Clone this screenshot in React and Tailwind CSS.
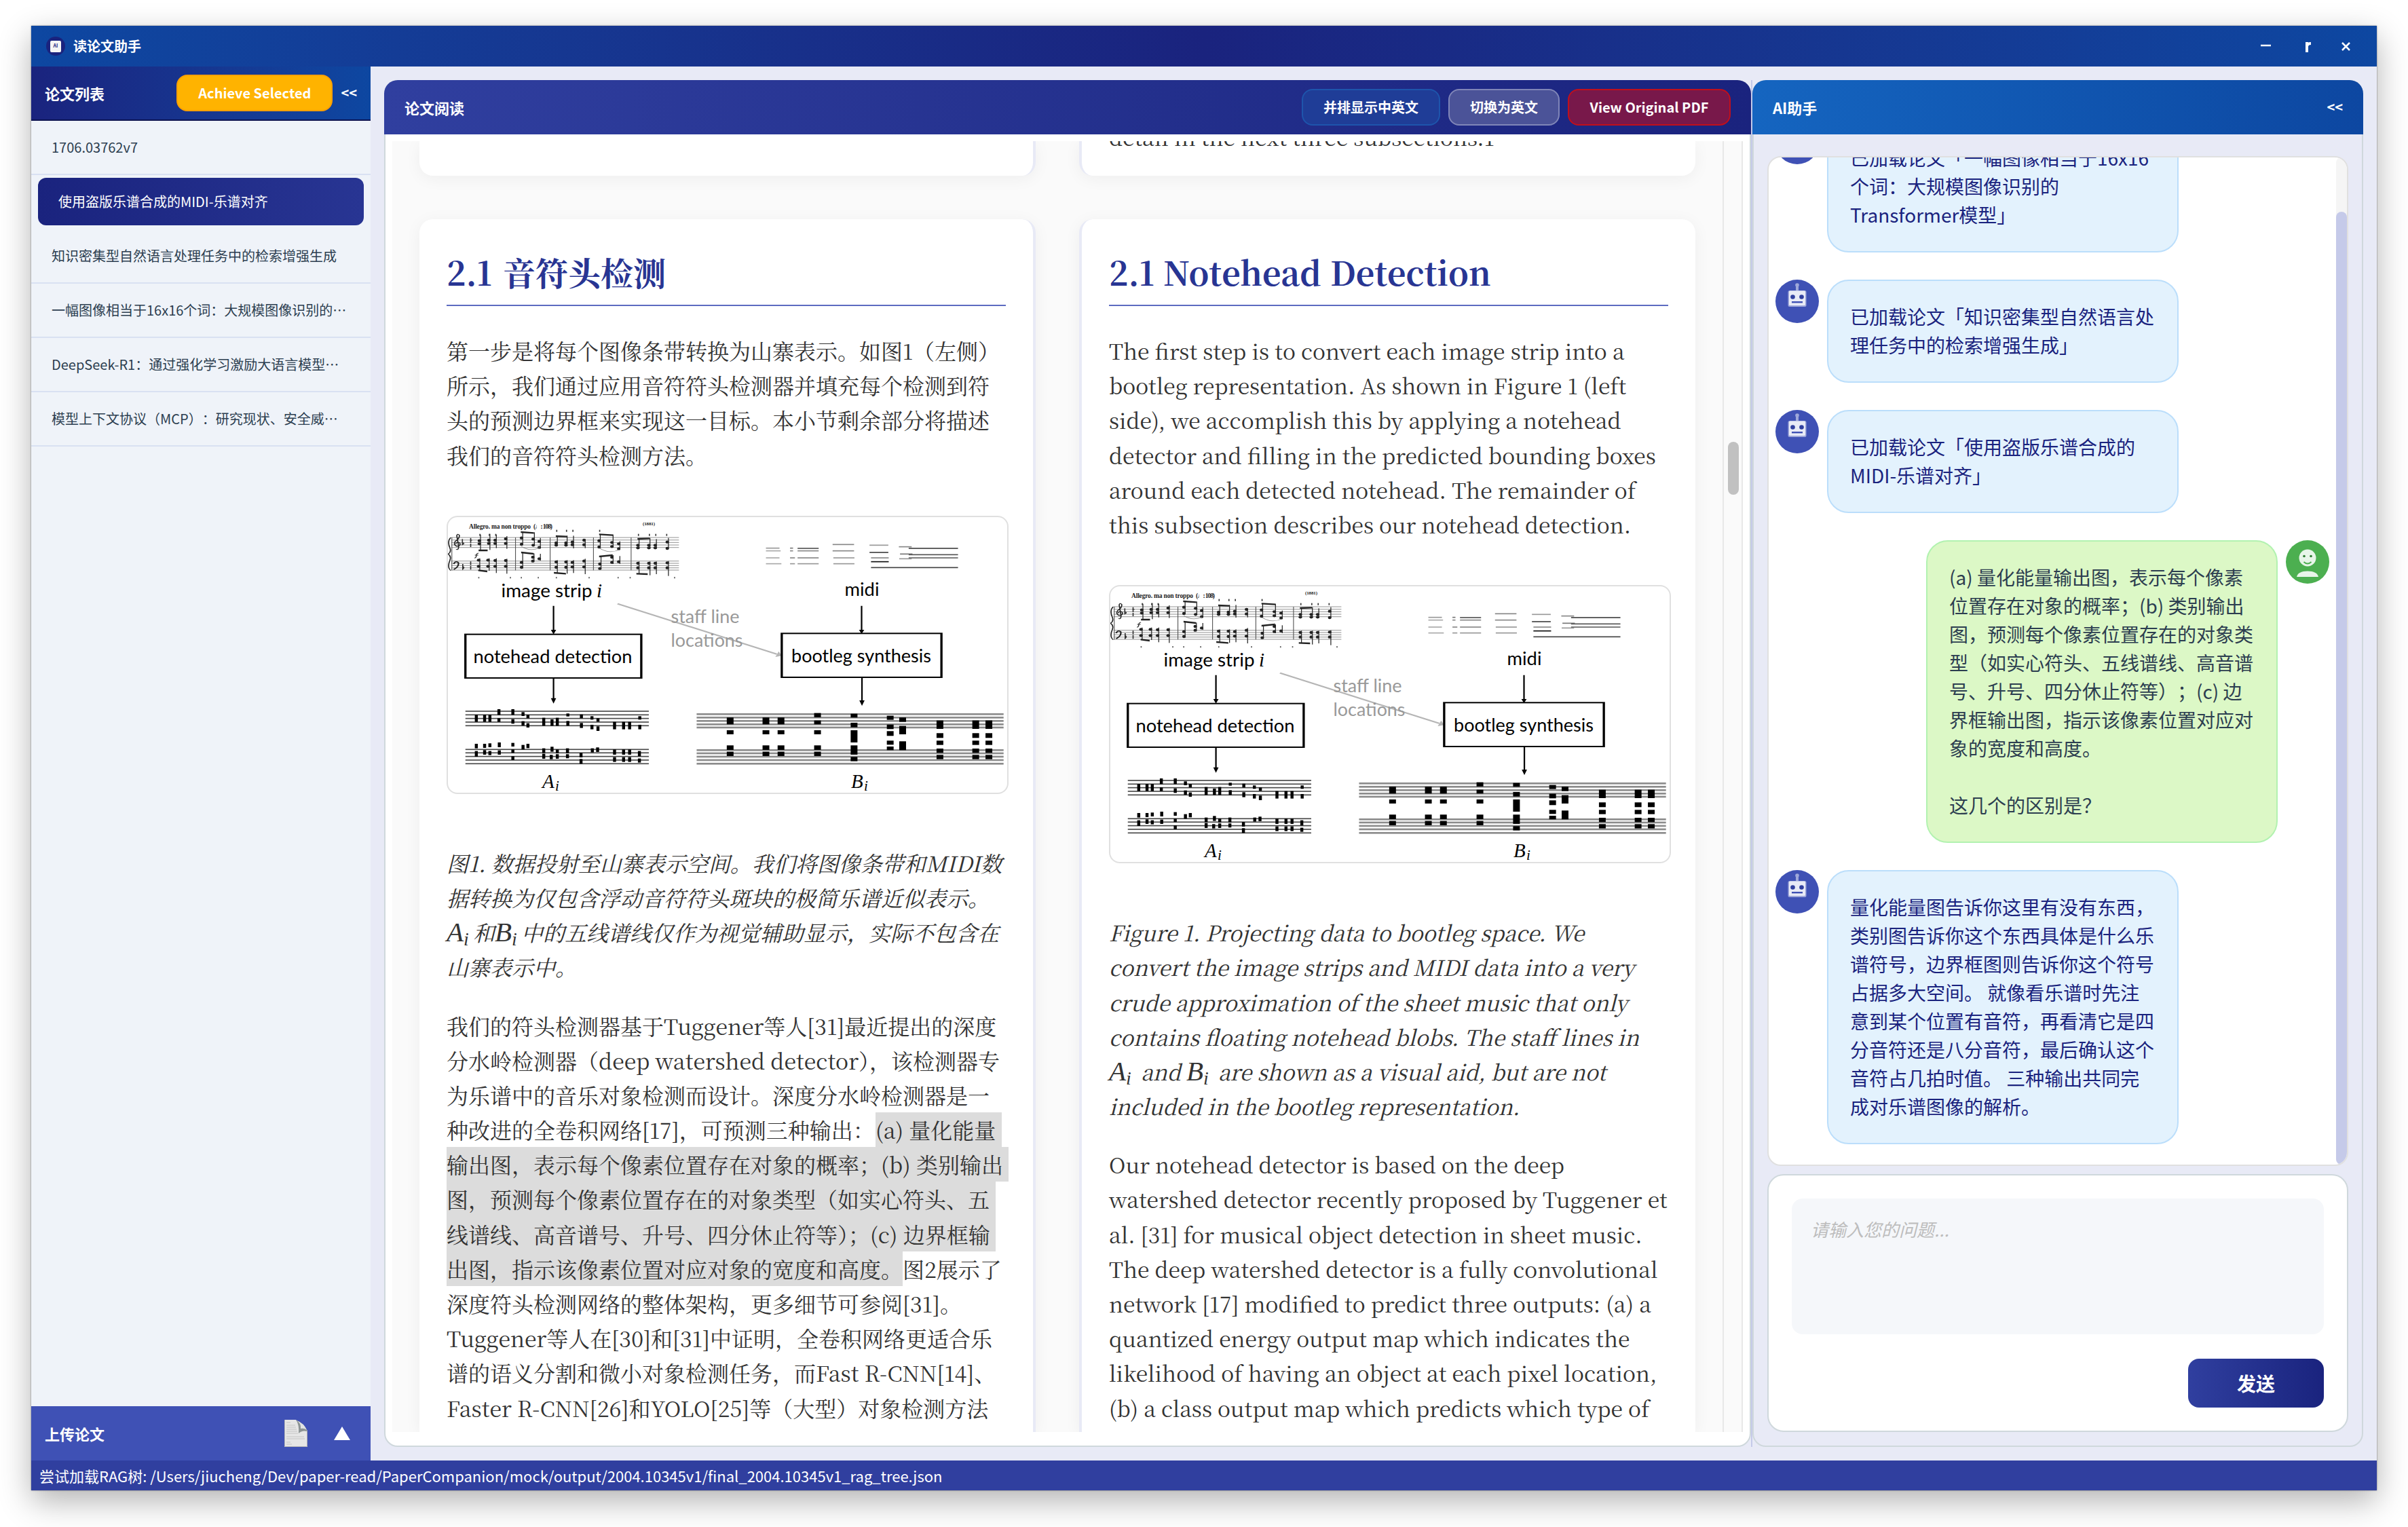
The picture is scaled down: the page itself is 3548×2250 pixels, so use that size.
import React from 'react';

const STAFF_A = [926, 942, 958, 974, 990, 1095, 1110, 1126, 1142, 1158];
const STAFF_B = [939, 954, 969, 984, 998, 1098, 1112, 1127, 1142, 1158];

const NOTES_A = [
  [112, 942, 973], [134, 942, 973], [148, 942, 973], [172, 917, 942], [172, 957, 973], [209, 917, 942], [209, 961, 981],
  [236, 930, 947], [236, 970, 989], [249, 942, 957], [249, 979, 998], [291, 955, 990], [313, 962, 990], [327, 955, 990],
  [355, 936, 949], [355, 969, 990], [391, 940, 957], [391, 978, 1000], [419, 948, 963], [419, 986, 1006], [435, 957, 972],
  [435, 993, 1013], [479, 973, 1006], [503, 973, 1006], [519, 973, 1006], [546, 948, 963], [546, 986, 1006],
  [112, 1070, 1090], [112, 1102, 1127], [134, 1070, 1088], [134, 1098, 1118], [148, 1068, 1085], [148, 1102, 1120],
  [173, 1064, 1085], [173, 1099, 1118], [209, 1066, 1082], [209, 1095, 1110], [209, 1125, 1142], [236, 1075, 1095],
  [249, 1070, 1089], [291, 1090, 1110], [291, 1114, 1136], [313, 1083, 1105], [311, 1119, 1138], [327, 1095, 1112],
  [327, 1116, 1136], [354, 1090, 1112], [354, 1116, 1134], [390, 1110, 1130], [390, 1137, 1158], [420, 1090, 1108],
  [434, 1086, 1106], [479, 1095, 1118], [479, 1129, 1150], [503, 1095, 1118], [503, 1129, 1150], [519, 1095, 1118],
  [519, 1129, 1150], [545, 1102, 1125], [545, 1135, 1153],
];

const LOW = [[954, 984], [1010, 1028], [1077, 1097], [1105, 1124]];
const HIGH = [[967, 1004], [1023, 1044], [1056, 1075], [1091, 1110], [1119, 1138]];
const NOTES_B = [
  [786, LOW], [881, LOW], [921, LOW],
  [1018, [[934, 953], [967, 984], [1010, 1028], [1077, 1097], [1105, 1124]]],
  [1115, [[937, 954], [977, 997], [1010, 1064], [1077, 1118], [1128, 1147]]],
  [1211, [[946, 964], [985, 1005], [1014, 1035], [1056, 1074], [1082, 1098]]],
  [1244, [[954, 973], [991, 1028], [1059, 1098]]],
  [1343, HIGH], [1438, HIGH], [1473, HIGH],
];

const MIDI = [
  [881, 917, 205, '#999'], [881, 920, 217, '#aaa'], [881, 917, 248, '#aaa'], [881, 922, 274, '#aaa'], [945, 953, 205, '#777'],
  [965, 1021, 206, '#555'], [945, 953, 217, '#888'], [965, 1021, 217, '#888'], [945, 958, 248, '#888'], [965, 1021, 248, '#888'],
  [945, 958, 274, '#999'], [965, 1021, 274, '#999'], [1058, 1115, 189, '#888'], [1058, 1115, 217, '#888'], [1060, 1116, 248, '#999'],
  [1060, 1116, 274, '#999'], [1156, 1206, 192, '#999'], [1156, 1206, 224, '#444'], [1160, 1207, 248, '#888'], [1160, 1207, 265, '#111'],
  [1160, 1391, 291, '#444'], [1234, 1268, 199, '#888'], [1260, 1391, 206, '#444'], [1237, 1270, 231, '#777'], [1260, 1391, 234, '#555'],
  [1235, 1268, 252, '#999'], [1260, 1391, 248, '#666'],
];

/* x, stem top, stem bottom, note heads */
const CHORDS = [
  [120, 145, 215, [172, 186]], [145, 142, 213, [170, 184]], [162, 145, 205, [170, 184]], [190, 152, 208, [164, 184]],
  [232, 135, 190, [160, 188]], [263, 135, 195, [165, 192]], [279, 160, 206, [175, 202]],
  [324, 150, 196, [182, 192]], [350, 150, 196, [182, 192]], [367, 150, 206, [178, 190]], [398, 165, 205, [170, 190]],
  [438, 145, 205, [172, 200]], [472, 148, 203, [180, 198]], [490, 175, 212, [186, 208]],
  [541, 165, 208, [192, 204]], [570, 160, 208, [192, 204]], [587, 165, 208, [192, 204]], [619, 160, 208, [178, 206]],
  [118, 250, 305, [258, 285]], [143, 250, 305, [258, 285]], [162, 250, 315, [260, 285]], [190, 252, 318, [260, 285]],
  [232, 225, 295, [268, 290]], [262, 228, 265, [245, 262]], [279, 230, 260, [252]],
  [324, 258, 315, [266, 290]], [350, 258, 318, [266, 290]], [367, 258, 315, [268, 288]], [398, 252, 320, [262, 288]],
  [440, 240, 298, [275, 295]], [472, 236, 275, [245, 268]], [490, 240, 275, [265]],
  [541, 264, 320, [272, 292]], [570, 264, 325, [272, 292]], [587, 264, 320, [272, 292]], [619, 262, 328, [270, 292]],
];

const BEAMS = [
  [118, 142, 215, 215], [230, 265, 134, 138], [323, 353, 152, 154], [438, 476, 144, 148], [540, 572, 164, 162],
  [117, 141, 303, 308], [231, 264, 224, 230], [318, 350, 314, 318], [438, 474, 242, 236], [537, 567, 318, 320],
];

function Figure() {
  return (
    <div className="h-[410px] w-[828px] shrink-0 overflow-hidden rounded-2xl border-2 border-[#e0e0e0] bg-white">
      <svg viewBox="2 2 824 406" className="block h-[406px] w-[824px]">
        <g transform="scale(.5549 .3333) translate(-33 -62)">
          {[158, 169, 180, 191, 202, 262, 272, 282, 292, 302].map((y) => (
            <rect key={y} x="45" y={y - 1.5} width="605" height="3.2" fill="#9a9a9a" />
          ))}
          {[46, 215, 307, 422, 522].map((x) => (
            <rect key={x} x={x} y="158" width="2" height="145" fill="#555" />
          ))}
          <path d="M44 158Q34 175 42 205Q46 222 37 231Q46 240 42 258Q34 290 44 304" fill="none" stroke="#222" strokeWidth="3" />
          <path d="M58 210Q66 215 65 195L60 150Q62 138 67 148Q68 162 56 175Q50 190 60 197Q72 196 68 182Q62 174 57 186" fill="none" stroke="#222" strokeWidth="3" />
          <path d="M52 275Q56 260 64 268Q68 285 52 300" fill="none" stroke="#222" strokeWidth="4" />
          <path d="M75 165V190Q82 184 76 180M76 275V298Q82 290 76 286M97 160V182M95 170H101M97 185V200M97 264V280M97 284V300" fill="none" stroke="#333" strokeWidth="3" />
          <path d="M118 227Q112 228 112 238Q112 247 107 249M108 236H117" fill="none" stroke="#333" strokeWidth="2.5" />
          {CHORDS.map(([x, a, b, heads], i) => (
            <g key={i} fill="#222">
              <rect x={x + 2} y={a} width="2.2" height={b - a} />
              {heads.map((h) => (
                <ellipse key={h} cx={x} cy={h} rx="4.6" ry="6.5" />
              ))}
            </g>
          ))}
          {BEAMS.map(([a, b, c, d], i) => (
            <path key={i} d={`M${a} ${c - 3.5}L${b} ${d - 3.5}V${d + 3.5}L${a} ${c + 3.5}Z`} fill="#222" />
          ))}
          <path d="M232 198Q255 222 280 204M440 206Q465 232 492 212" fill="none" stroke="#888" strokeWidth="2" />
          {[120, 145, 162, 324, 350, 367, 438, 541, 570, 587, 616].map((x) => (
            <rect key={x} x={x} y={x > 300 && x < 450 ? 124 : 142} width="3" height="9" fill="#333" />
          ))}
          {[117, 201, 230, 275, 323, 410, 487, 519, 637].map((x) => (
            <rect key={x} x={x} y="332" width="3" height="7" fill="#666" />
          ))}

          {MIDI.map(([a, b, y, c], i) => (
            <rect key={i} x={a} y={y - 2.5} width={b - a} height="5" fill={c} />
          ))}

          <path d="M487 451L910 674" stroke="#b5b5b5" strokeWidth="6" />
          <path d="M923 681L906 686L915 661Z" fill="#b5b5b5" />

          <rect x="83" y="586" width="467" height="193" fill="#fff" stroke="#000" strokeWidth="6" />
          <rect x="923" y="582" width="424" height="194" fill="#fff" stroke="#000" strokeWidth="6" />
          <path d="M317 460V572M317 781V875M1135 460V572M1136 777V885" stroke="#000" strokeWidth="4" />
          <path d="M310 566H324L317 586ZM310 868H324L317 892ZM1128 566H1142L1135 584ZM1129 878H1143L1136 902Z" />

          {STAFF_A.map((y) => (
            <rect key={y} x="83" y={y - 2.5} width="487" height="5" fill="#4a4a4a" />
          ))}
          {NOTES_A.map(([x, a, b], i) => (
            <rect key={i} x={x - 4} y={a} width="8" height={b - a} />
          ))}
          {STAFF_B.map((y) => (
            <rect key={y} x="697" y={y - 4} width="815" height="8" fill="#8c8c8c" />
          ))}
          {NOTES_B.map(([x, runs]) =>
            runs.map(([a, b]) => <rect key={`${x}-${a}`} x={x - 9} y={a} width="18" height={b - a} />)
          )}
        </g>
        <g fontFamily="Lato, 'Open Sans', sans-serif" fontSize="27">
          <text x="80.5" y="120" textLength="134" lengthAdjust="spacingAndGlyphs">image strip</text>
          <text x="586.5" y="117.5" textLength="51" lengthAdjust="spacingAndGlyphs">midi</text>
          <text x="39.5" y="217" textLength="234" lengthAdjust="spacingAndGlyphs">notehead detection</text>
          <text x="508" y="216" textLength="206" lengthAdjust="spacingAndGlyphs">bootleg synthesis</text>
          <text x="330.5" y="157.5" textLength="101" lengthAdjust="spacingAndGlyphs" fill="#999">staff line</text>
          <text x="330.5" y="193" textLength="106" lengthAdjust="spacingAndGlyphs" fill="#999">locations</text>
        </g>
        <g fontFamily="'Liberation Serif', serif" fontStyle="italic" fontSize="29">
          <text x="221" y="120">i</text>
          <text x="141" y="401">A</text>
          <text x="160" y="405" fontSize="21">i</text>
          <text x="596" y="401">B</text>
          <text x="615" y="405" fontSize="21">i</text>
        </g>
        <g fontFamily="'Liberation Serif', serif" fontWeight="bold" fontSize="9.5" fill="#222">
          <text x="33" y="19" textLength="91">Allegro. ma non troppo</text>
          <text x="128" y="19" textLength="28">(♩: 108)</text>
          <text x="289" y="14" fontSize="7" textLength="18">(1881)</text>
        </g>
      </svg>
    </div>
  );
}

function Line({ children }) {
  return <div className="h-[51.2px] text-[32px] leading-[51.2px] whitespace-nowrap">{children}</div>;
}

function En({ children }) {
  return <div className="h-[51.2px] text-[31.8px] leading-[51.2px] whitespace-nowrap">{children}</div>;
}

function Mark({ w, children }) {
  return (
    <div className={`h-[51.2px] bg-[#dcdcdc] ${w}`}>
      <Line>{children}</Line>
    </div>
  );
}

function Var({ name }) {
  return (
    <span className="inline-block h-[51px] w-[39px] align-top font-['Liberation_Serif',serif]">
      <span className="text-[41px]">{name}</span>
      <span className="relative top-[6px] text-[28px]">i</span>
    </span>
  );
}

function SectionTitle({ children, spacing }) {
  return (
    <h2 className={`mb-10 h-[88px] w-[824px] border-b-2 border-[#5c6bc0] text-[48px] leading-[76px] font-bold whitespace-nowrap text-[#283593] ${spacing}`}>
      {children}
    </h2>
  );
}

const CARD = 'w-[908px] shrink-0 bg-white shadow-[0_4px_24px_rgba(0,0,0,0.05)]';

function Reader() {
  return (
    <section className="flex h-[2014px] w-[2014px] shrink-0 flex-col rounded-[20px] border-2 border-[#cfd8dc] bg-white">
      <header className="-mx-0.5 -mt-0.5 flex h-20 shrink-0 items-center justify-end gap-3 rounded-t-[20px] bg-linear-to-r from-[#303f9f] to-[#1a237e] pr-[30px] pl-[30px] text-[20px] font-bold text-white">
        <h1 className="mr-auto text-[22px]">论文阅读</h1>
        <button className="h-[54px] w-[204px] rounded-2xl border-2 border-[#1e55ac] bg-[#1f3d97]">并排显示中英文</button>
        <button className="h-[54px] w-[164px] rounded-2xl border-2 border-[#8086b8] bg-[#4b5398]">切换为英文</button>
        <button className="h-[54px] w-[240px] rounded-2xl border-2 border-[#c00f1c] bg-[#78184a]">View Original PDF</button>
      </header>
      <div className="mx-[10px] mt-[10px] mb-[20px] flex min-h-0 flex-1 overflow-hidden bg-[#fafafa] font-['Noto_Serif_CJK_SC','Liberation_Serif',serif] text-[#333] [text-spacing-trim:normal]">
        <div className="flex h-[1902px] w-[1960px] flex-col gap-16 overflow-hidden px-10">
          <div className="flex h-[51px] shrink-0 gap-16">
            <div className={`${CARD} rounded-b-[20px] border-r-4 border-[#e8eaf6]`} />
            <div className={`${CARD} rounded-b-[20px] border-l-4 border-[#e8eaf6] px-10`}>
              <div className="-mt-8">
                <En>detail in the next three subsections.1</En>
              </div>
            </div>
          </div>
          <div className="flex min-h-0 flex-1 gap-16">
            <article className={`${CARD} rounded-t-[20px] border-r-4 border-[#e8eaf6] px-10 pt-10`}>
              <SectionTitle spacing="[word-spacing:4px]">2.1 音符头检测</SectionTitle>
              <Line>第一步是将每个图像条带转换为山寨表示。如图1（左侧）</Line>
              <Line>所示，我们通过应用音符符头检测器并填充每个检测到符</Line>
              <Line>头的预测边界框来实现这一目标。本小节剩余部分将描述</Line>
              <Line>我们的音符符头检测方法。</Line>
              <div className="mt-16 mb-[76px]">
                <Figure />
              </div>
              <div className="mb-[35px] italic">
                <Line>图1. 数据投射至山寨表示空间。我们将图像条带和MIDI数</Line>
                <Line>据转换为仅包含浮动音符符头斑块的极简乐谱近似表示。</Line>
                <Line>
                  <Var name="A" />和<Var name="B" />
                  中的五线谱线仅作为视觉辅助显示，实际不包含在
                </Line>
                <Line>山寨表示中。</Line>
              </div>
              <Line>我们的符头检测器基于Tuggener等人[31]最近提出的深度</Line>
              <Line>分水岭检测器（deep watershed detector），该检测器专</Line>
              <Line>为乐谱中的音乐对象检测而设计。深度分水岭检测器是一</Line>
              <div className="flex">
                <div className="w-[632px]">
                  <Line>种改进的全卷积网络[17]，可预测三种输出：</Line>
                </div>
                <Mark w="w-[186px]">(a) 量化能量</Mark>
              </div>
              <Mark w="w-[828px]">输出图，表示每个像素位置存在对象的概率；(b) 类别输出</Mark>
              <Mark w="w-[809px]">图，预测每个像素位置存在的对象类型（如实心符头、五</Mark>
              <Mark w="w-[809px]">线谱线、高音谱号、升号、四分休止符等）；(c) 边界框输</Mark>
              <div className="flex">
                <Mark w="w-[672px]">出图，指示该像素位置对应对象的宽度和高度。</Mark>
                <Line>图2展示了</Line>
              </div>
              <Line>深度符头检测网络的整体架构，更多细节可参阅[31]。</Line>
              <Line>Tuggener等人在[30]和[31]中证明，全卷积网络更适合乐</Line>
              <Line>谱的语义分割和微小对象检测任务，而Fast R-CNN[14]、</Line>
              <Line>Faster R-CNN[26]和YOLO[25]等（大型）对象检测方法</Line>
            </article>
            <article className={`${CARD} rounded-t-[20px] border-l-4 border-[#e8eaf6] px-10 pt-10`}>
              <SectionTitle spacing="[word-spacing:1px]">2.1 Notehead Detection</SectionTitle>
              <En>The first step is to convert each image strip into a</En>
              <En>bootleg representation. As shown in Figure 1 (left</En>
              <En>side), we accomplish this by applying a notehead</En>
              <En>detector and filling in the predicted bounding boxes</En>
              <En>around each detected notehead. The remainder of</En>
              <En>this subsection describes our notehead detection.</En>
              <div className="mt-16 mb-[76px]">
                <Figure />
              </div>
              <div className="mb-[35px] italic">
                <En>Figure 1. Projecting data to bootleg space. We</En>
                <En>convert the image strips and MIDI data into a very</En>
                <En>crude approximation of the sheet music that only</En>
                <En>contains floating notehead blobs. The staff lines in</En>
                <En>
                  <Var name="A" /> and <Var name="B" /> are shown as a visual aid, but are not
                </En>
                <En>included in the bootleg representation.</En>
              </div>
              <En>Our notehead detector is based on the deep</En>
              <En>watershed detector recently proposed by Tuggener et</En>
              <En>al. [31] for musical object detection in sheet music.</En>
              <En>The deep watershed detector is a fully convolutional</En>
              <En>network [17] modified to predict three outputs: (a) a</En>
              <En>quantized energy output map which indicates the</En>
              <En>likelihood of having an object at each pixel location,</En>
              <En>(b) a class output map which predicts which type of</En>
            </article>
          </div>
        </div>
        <div className="w-[30px] border-x-2 border-[#e8e8e8] pt-[443px] pl-[6px]">
          <div className="h-[78px] w-4 rounded-full bg-[#c1c1c1]" />
        </div>
      </div>
    </section>
  );
}

function Robot() {
  return (
    <svg viewBox="0 0 64 64" className="size-16 shrink-0">
      <circle cx="32" cy="32" r="32" fill="#3f51b5" />
      <path d="M32 8V17" stroke="#9fa8da" strokeWidth="4" />
      <circle cx="32" cy="8" r="2.8" fill="#9fa8da" />
      <rect x="18.5" y="16" width="27" height="24" rx="2.5" fill="#9fa8da" />
      <rect x="20" y="16.5" width="24" height="21.5" rx="1.5" fill="#e8eaf6" />
      <circle cx="25.5" cy="25.5" r="3.3" fill="#303f9f" />
      <circle cx="38.5" cy="25.5" r="3.3" fill="#303f9f" />
      <rect x="24" y="32" width="16" height="2.4" fill="#3f51b5" />
    </svg>
  );
}

function Person() {
  return (
    <svg viewBox="0 0 64 64" className="size-16 shrink-0">
      <circle cx="32" cy="32" r="32" fill="#4caf50" />
      <circle cx="32" cy="26" r="12.5" fill="#e8f5e9" />
      <circle cx="27" cy="23.5" r="1.8" fill="#2e7d32" />
      <circle cx="37" cy="23.5" r="1.8" fill="#2e7d32" />
      <path d="M26.5 32Q32 37 37.5 32" fill="none" stroke="#4caf50" strokeWidth="2" />
      <path d="M16 54Q18 45.5 32 45.5Q46 45.5 48 54Z" fill="#e8f5e9" />
    </svg>
  );
}

const BUBBLE = 'w-[518px] rounded-[32px] border-2 pt-[31px] pb-[33px] pl-8 text-[28px] leading-[42px] whitespace-pre';

function Bot({ lines }) {
  return (
    <div className="flex items-start gap-3">
      <Robot />
      <div className={`${BUBBLE} border-[#bbdefb] bg-[#e3f2fd] text-[#1a237e]`}>{lines.join('\n')}</div>
    </div>
  );
}

function Me({ lines }) {
  return (
    <div className="flex items-start justify-end gap-3">
      <div className={`${BUBBLE} border-[#b2f2b0] bg-[#dcf8c6] text-[#2c3e50]`}>{lines.join('\n')}</div>
      <Person />
    </div>
  );
}

function Chat() {
  return (
    <section className="flex h-[2014px] w-[900px] shrink-0 flex-col rounded-[20px] border-2 border-[#cfd8dc]">
      <header className="-mx-0.5 -mt-0.5 flex h-20 shrink-0 items-center justify-between rounded-t-[20px] bg-linear-to-r from-[#1565c0] to-[#0d47a1] px-[30px] text-[22px] font-bold text-white">
        <h1>AI助手</h1>
        <span className="text-[20px]">&lt;&lt;</span>
      </header>
      <div className="flex min-h-0 flex-1 flex-col gap-3 px-5 pt-8 pb-5">
        <div className="flex h-[1488px] shrink-0 overflow-hidden rounded-[20px] border-2 border-[#e0e0e0] bg-white">
          <div className="-mt-[54px] flex flex-1 flex-col gap-10 px-[10px]">
            <Bot lines={['已加载论文「一幅图像相当于16x16', '个词：大规模图像识别的', 'Transformer模型」']} />
            <Bot lines={['已加载论文「知识密集型自然语言处', '理任务中的检索增强生成」']} />
            <Bot lines={['已加载论文「使用盗版乐谱合成的', 'MIDI-乐谱对齐」']} />
            <Me
              lines={[
                '(a) 量化能量输出图，表示每个像素',
                '位置存在对象的概率；(b) 类别输出',
                '图，预测每个像素位置存在的对象类',
                '型（如实心符头、五线谱线、高音谱',
                '号、升号、四分休止符等）；(c) 边',
                '界框输出图，指示该像素位置对应对',
                '象的宽度和高度。',
                '',
                '这几个的区别是？',
              ]}
            />
            <Bot
              lines={[
                '量化能量图告诉你这里有没有东西，',
                '类别图告诉你这个东西具体是什么乐',
                '谱符号，边界框图则告诉你这个符号',
                '占据多大空间。 就像看乐谱时先注',
                '意到某个位置有音符，再看清它是四',
                '分音符还是八分音符，最后确认这个',
                '音符占几拍时值。 三种输出共同完',
                '成对乐谱图像的解析。',
              ]}
            />
          </div>
          <div className="flex w-4 flex-col justify-end rounded-full bg-[#f5f5f5]">
            <div className="h-[1404px] rounded-full bg-[#c5cae9]" />
          </div>
        </div>
        <div className="flex min-h-0 flex-1 flex-col items-end justify-between rounded-3xl border-2 border-[#cfd8dc] bg-white p-[34px]">
          <div className="h-[200px] w-full rounded-2xl bg-[#f5f7fa] px-[28px] pt-[25px] text-[26px] text-[#bdbdbd] italic">
            请输入您的问题...
          </div>
          <button className="h-[72px] w-[200px] rounded-2xl bg-linear-to-r from-[#303f9f] to-[#1a237e] text-[28px] font-bold text-white">
            发送
          </button>
        </div>
      </div>
    </section>
  );
}

function Paper({ children }) {
  return (
    <li className="flex h-20 items-center border-b-2 border-[#d9e1f2] pr-8 pl-[30px]">
      <span className="whitespace-nowrap">{children}</span>
    </li>
  );
}

function Sidebar() {
  return (
    <aside className="flex w-[500px] shrink-0 flex-col bg-[#eff3f9]">
      <header className="flex h-20 shrink-0 items-center border-b-2 border-[#0d1452] bg-linear-to-r from-[#1a237e] to-[#0d47a1] pr-5 pl-5 text-[22px] font-bold text-white">
        <h1 className="mr-auto">论文列表</h1>
        <button className="mr-3 h-[54px] w-[230px] rounded-2xl border-2 border-[#ffa000] bg-[#ffb300] text-[20px]">Achieve Selected</button>
        <span className="text-[20px]">&lt;&lt;</span>
      </header>
      <ul className="flex-1 text-[20px] text-[#2c3e50]">
        <Paper>1706.03762v7</Paper>
        <li className="flex h-20 items-start px-[10px] pt-1">
          <div className="flex h-[70px] w-full items-center rounded-xl bg-linear-to-r from-[#1a237e] to-[#283593] pl-[30px] text-white">
            使用盗版乐谱合成的MIDI-乐谱对齐
          </div>
        </li>
        <Paper>知识密集型自然语言处理任务中的检索增强生成</Paper>
        <Paper>一幅图像相当于16x16个词：大规模图像识别的…</Paper>
        <Paper>DeepSeek-R1：通过强化学习激励大语言模型…</Paper>
        <Paper>模型上下文协议（MCP）：研究现状、安全威…</Paper>
      </ul>
      <footer className="flex h-20 items-center bg-[#3f51b5] pr-[30px] pl-5 text-[22px] font-bold text-white">
        <span className="mr-auto">上传论文</span>
        <svg viewBox="0 0 34 40" className="mr-[39px] h-10 w-[34px]">
          <path d="M0 0H17L34 16V40H0Z" fill="#e6e6e6" />
          <path d="M3 4H9M3 8H16M3 11H17M3 14H18M3 17H19M3 20H20M3 25H29M3 28H30M3 33H9M3 36H11" stroke="#c4c4c4" strokeWidth="1.2" />
          <path d="M17 0Q22 7 21 20Q26 15 34 17Q30 6 17 0Z" fill="#8d9494" />
          <path d="M18 1Q25 5 24 13Q29 12 33 15Q29 5 18 1Z" fill="#dfe3e3" />
          <path d="M.5 0V39.5H33.5V17" fill="none" stroke="#b5b5b5" />
        </svg>
        <svg viewBox="0 0 24 20" className="h-5 w-6">
          <path d="M12 0L24 20H0Z" fill="#fff" />
        </svg>
      </footer>
    </aside>
  );
}

export default function App() {
  return (
    <div className="h-[2250px] w-[3548px] overflow-hidden bg-white pt-[38px] pl-[46px] font-['Noto_Sans_CJK_SC',sans-serif] [text-spacing-trim:space-all]" lang="zh-CN">
      <div className="flex h-[2158px] w-[3456px] flex-col bg-[#e8eaf6] shadow-[0_0_2px_rgba(0,0,0,0.5),0_16px_44px_rgba(0,0,0,0.3)]">
        <div className="flex h-[60px] shrink-0 items-center bg-linear-to-r from-[#0d47a1] via-[#1a237e] to-[#0d47a1] pr-[38px] pl-[22px] text-white">
          <svg viewBox="0 0 28 28" className="size-7">
            <circle cx="14" cy="14" r="14" fill="#1a237e" />
            <rect x="6" y="6" width="16" height="17" rx="2" fill="#f5f5f5" />
            <text x="14" y="16" fontSize="7" fontWeight="bold" textAnchor="middle" fill="#1a237e">AI</text>
          </svg>
          <span className="mr-auto ml-3 text-[20px] font-bold">读论文助手</span>
          <svg viewBox="0 0 136 24" className="h-6 w-[136px]" fill="none" stroke="#fff">
            <path d="M3 11H18" strokeWidth="2.5" />
            <path d="M71 6V21M71 12Q72 8 77 8" strokeWidth="4" />
            <path d="M123 7L134 18M134 7L123 18" strokeWidth="2.5" />
          </svg>
        </div>
        <div className="flex h-[2054px]">
          <Sidebar />
          <main className="flex flex-1 pt-5 pl-5">
            <Reader />
            <div className="h-[2014px] w-0.5 bg-[#c5cae9]" />
            <Chat />
          </main>
        </div>
        <div className="flex h-11 items-center bg-[#303f9f] pl-3 text-[22px] text-white">
          尝试加载RAG树: /Users/jiucheng/Dev/paper-read/PaperCompanion/mock/output/2004.10345v1/final_2004.10345v1_rag_tree.json
        </div>
      </div>
    </div>
  );
}
